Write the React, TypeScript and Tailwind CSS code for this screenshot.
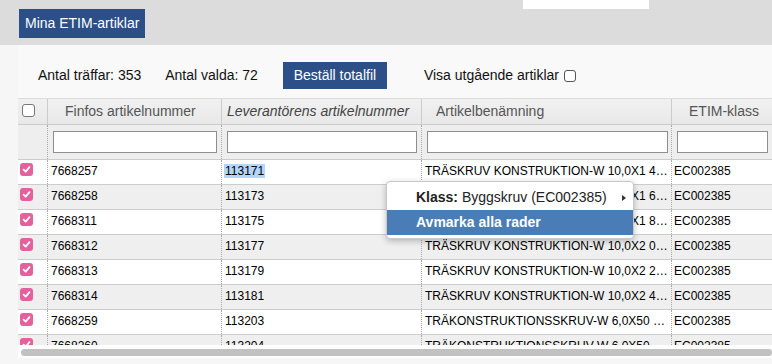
import React from "react";

const cols = "grid grid-cols-[29px_174px_200px_250px_130px]";

const rows = [
  ["7668257", "113171", "TRÄSKRUV KONSTRUKTION-W 10,0X1 4…"],
  ["7668258", "113173", "TRÄSKRUV KONSTRUKTION-W 10,0X1 6…"],
  ["7668311", "113175", "TRÄSKRUV KONSTRUKTION-W 10,0X1 8…"],
  ["7668312", "113177", "TRÄSKRUV KONSTRUKTION-W 10,0X2 0…"],
  ["7668313", "113179", "TRÄSKRUV KONSTRUKTION-W 10,0X2 2…"],
  ["7668314", "113181", "TRÄSKRUV KONSTRUKTION-W 10,0X2 4…"],
  ["7668259", "113203", "TRÄKONSTRUKTIONSSKRUV-W 6,0X50 …"],
  ["7668260", "113204", "TRÄKONSTRUKTIONSSKRUV-W 6,0X50…"],
];

function PinkCheck() {
  return (
    <div className="w-[13px] h-[13px] rounded-[3px] bg-[#e4619e] flex items-center justify-center">
      <svg width="9" height="9" viewBox="0 0 10 10">
        <path d="M1.8 5.2 L4.1 7.4 L8.3 2.4" fill="none" stroke="white" strokeWidth="2" strokeLinecap="round" strokeLinejoin="round" />
      </svg>
    </div>
  );
}

export default function App() {
  return (
    <div
      className="relative w-[772px] h-[364px] overflow-hidden bg-[#f6f6f6] text-black"
      style={{ fontFamily: '"Liberation Sans", Arial, sans-serif' }}
    >
      {/* top band */}
      <div className="relative h-[45px] bg-[#dcdcdc] pt-[9px] pl-[19px]">
        <div className="absolute left-[523px] top-0 w-[126px] h-[9px] bg-white" />
        <div className="w-[126px] h-[29px] bg-[#2b4f86] text-white text-[14px] leading-[29px] pl-[6px]">
          Mina ETIM-artiklar
        </div>
      </div>

      {/* stats */}
      <div className="ml-[18px] h-[54px] border-b border-[#dcdcdc] bg-[#f9f9f9] pt-[17px] pl-[20px]">
        <div className="flex items-center h-[27px] text-[14px] text-[#111]">
          <span>Antal träffar: 353</span>
          <span className="ml-[24px]">Antal valda: 72</span>
          <div className="ml-[25px] w-[104px] h-[27px] bg-[#2b4f86] text-white leading-[27px] text-center">
            Beställ totalfil
          </div>
          <span className="ml-[37px]">Visa utgående artiklar</span>
          <div className="ml-[5px] w-[12px] h-[12px] rounded-[3px] border border-[#555] bg-white" />
        </div>
      </div>

      {/* table */}
      <div className="ml-[18px] overflow-hidden">
        {/* header */}
        <div className={`${cols} h-[26px] border-b border-[#cccccc] bg-gradient-to-b from-[#f1f1f1] to-[#e8e8e8] text-[14px] text-[#555] leading-[25px] whitespace-nowrap`}>
          <div className="pl-[4px] pt-[5px]">
            <div className="w-[13px] h-[13px] rounded-[3px] border border-[#777] bg-white" />
          </div>
          <div className="border-l border-[#cccccc] pl-[17px]">Finfos artikelnummer</div>
          <div className="border-l border-[#cccccc] pl-[5px] italic text-[#444]">Leverantörens artikelnummer</div>
          <div className="border-l border-[#cccccc] pl-[14px]">Artikelbenämning</div>
          <div className="border-l border-[#cccccc] pl-[17px]">ETIM-klass</div>
        </div>
        {/* filter */}
        <div className={`${cols} h-[35px] border-b border-[#cccccc] bg-[#eeeeee]`}>
          <div />
          <div className="border-l border-dotted border-[#aaaaaa] pl-[5px] pr-[4px] pt-[6px]">
            <div className="h-[22px] bg-white border border-[#8e8e8e]" />
          </div>
          <div className="border-l border-dotted border-[#aaaaaa] pl-[5px] pr-[4px] pt-[6px]">
            <div className="h-[22px] bg-white border border-[#8e8e8e]" />
          </div>
          <div className="border-l border-dotted border-[#aaaaaa] pl-[5px] pr-[3px] pt-[6px]">
            <div className="h-[22px] bg-white border border-[#8e8e8e]" />
          </div>
          <div className="border-l border-dotted border-[#aaaaaa] pl-[5px] pt-[6px]">
            <div className="w-[91px] h-[22px] bg-white border border-[#8e8e8e]" />
          </div>
        </div>
        {/* body */}
        <div className="h-[185px] overflow-hidden">
          {rows.map((r, i) => (
            <div
              key={r[0]}
              className={`${cols} h-[25px] border-b border-[#cccccc] text-[12px] leading-[22px] whitespace-nowrap ${
                i % 2 === 1 ? "bg-[#efefef]" : "bg-white"
              }`}
            >
              <div className="pl-[2px] pt-[3px]">
                <PinkCheck />
              </div>
              <div className="border-l border-dotted border-[#aaaaaa] pl-[3px] overflow-hidden">{r[0]}</div>
              <div className="border-l border-dotted border-[#aaaaaa] pl-[2px] overflow-hidden">
                {i === 0 ? <span className="bg-[#b4d5fe] px-[1px]">{r[1]}</span> : <span className="px-[1px]">{r[1]}</span>}
              </div>
              <div className="border-l border-dotted border-[#aaaaaa] pl-[3px] overflow-hidden">{r[2]}</div>
              <div className="border-l border-dotted border-[#aaaaaa] pl-[2px] overflow-hidden">EC002385</div>
            </div>
          ))}
        </div>
        {/* scrollbar */}
        <div className="h-[13px] bg-white pt-[4px] pl-[3px]">
          <div className="h-[7px] rounded-full bg-[#c1c1c1]" />
        </div>
      </div>

      {/* context menu */}
      <div className="absolute left-[386px] top-[181px] w-[248px] bg-white border border-[#c8c8c8] rounded-[4px] shadow-[0_2px_6px_rgba(0,0,0,0.25)] pt-[3px] pb-[3px] text-[14px] whitespace-nowrap">
        <div className="relative h-[25px] leading-[25px] pl-[29px] text-[#222]">
          <span className="font-bold">Klass:</span> Byggskruv (EC002385)
          <span className="absolute right-[7px] top-[10px] w-0 h-0 border-y-[3px] border-y-transparent border-l-[4px] border-l-[#333]" />
        </div>
        <div className="h-[25px] leading-[25px] pl-[29px] bg-[#4a7db6] text-white font-bold">
          Avmarka alla rader
        </div>
      </div>
    </div>
  );
}
